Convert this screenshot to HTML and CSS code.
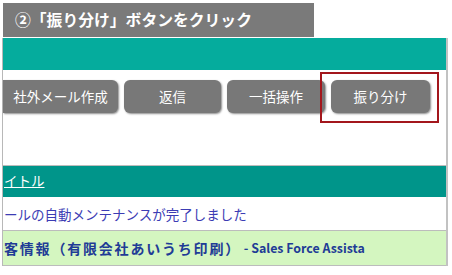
FILE: index.html
```html
<!DOCTYPE html>
<html>
<head>
  <title>振り分け</title>
  <link rel="stylesheet" href="styles.css">
</head>
<body>
  <div class="caption">②「振り分け」ボタンをクリック</div>

  <div class="panel">
    <div class="panel-head"></div>

    <div class="toolbar">
      <button class="btn btn-cut">社外メール作成</button>
      <button class="btn btn-reply">返信</button>
      <button class="btn btn-bulk">一括操作</button>
      <button class="btn btn-sort">振り分け</button>
      <div class="highlight"></div>
    </div>

    <div class="list">
      <div class="row row-head"><a href="#">イトル</a></div>
      <div class="row row-mail">ールの自動メンテナンスが完了しました</div>
      <div class="row row-new"><span class="subject">客情報（有限会社あいうち印刷）</span><span class="app">&nbsp;- Sales Force Assista</span></div>
    </div>
  </div>
</body>
</html>
```

FILE: styles.css
```css
body {
  margin: 0;
  background-color: white;
  font-family: "Noto Sans CJK JP", "Noto Sans", sans-serif;
}

.caption {
  margin: 3px 0 0 3px;
  width: 311px;
  height: 34px;
  box-sizing: border-box;
  padding-left: 12px;
  background-color: #7a7a7a;
  color: white;
  font-weight: bold;
  font-size: 15.8px;
  line-height: 34px;
  white-space: nowrap;
}

.panel {
  margin: 1px 0 0 2px;
  width: 446px;
  box-sizing: border-box;
  border-left: 1px solid #b8b8b8;
  border-right: 2px solid #c2c2c2;
}

.panel-head {
  height: 32px;
  background-color: #05ac9d;
}

.toolbar {
  position: relative;
  display: flex;
  gap: 6px;
  padding: 10px 0 52px 0;
}

.btn {
  height: 33px;
  padding: 0 0 2px 0;
  border: none;
  border-radius: 6px;
  background-color: #787878;
  color: white;
  font-family: inherit;
  font-size: 13.5px;
  box-shadow: 1px 1px 2px rgba(0, 0, 0, 0.45);
  cursor: pointer;
}

.btn-cut {
  width: 115px;
  border-radius: 0 6px 6px 0;
}

.btn-reply {
  width: 97px;
}

.btn-bulk {
  width: 98px;
}

.btn-sort {
  width: 99px;
}

.highlight {
  position: absolute;
  left: 317px;
  top: 2px;
  width: 119px;
  height: 51px;
  box-sizing: border-box;
  border: 2px solid #a3161c;
}

.list {
  border-bottom: 1px solid #bcbcbc;
}

.row {
  display: flex;
  align-items: center;
  padding-left: 1px;
  font-size: 13.5px;
  white-space: nowrap;
  overflow: hidden;
}

.row-head {
  height: 31px;
  border-top: 1px solid #bcbcbc;
  background-color: #00958a;
}

.row-head a {
  color: white;
  margin-top: -4px;
}

.row-mail {
  height: 33px;
  color: #3c3cb4;
}

.row-new {
  height: 34px;
  border-top: 1px solid #bcbcbc;
  background-color: #d4f6c0;
  color: #1f3c96;
  font-weight: bold;
}

.row-new .subject {
  font-size: 14px;
  letter-spacing: 1.8px;
}

.row-new .app {
  font-size: 12.4px;
}
```
